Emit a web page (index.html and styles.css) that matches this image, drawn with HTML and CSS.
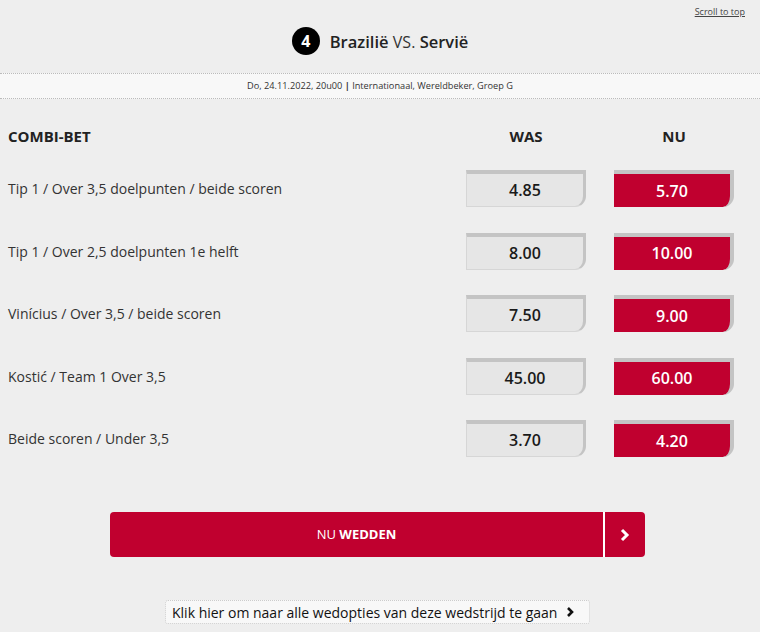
FILE: index.html
```html
<!DOCTYPE html>
<html lang="nl">
<head>
    <meta charset="UTF-8">
    <title>Brazilië vs. Servië - Combi-bet</title>
    <link rel="stylesheet" href="styles.css">
</head>
<body>
    <div class="top-bar">
        <a href="#" class="scroll-top">Scroll to top</a>
    </div>

    <h2 class="match-title">
        <span class="match-nr">4</span>
        <span><b>Brazilië</b> <span class="vs">VS.</span> <b>Servië</b></span>
    </h2>

    <div class="match-meta">
        Do, 24.11.2022, 20u00 <b>|</b> Internationaal, Wereldbeker, Groep G
    </div>

    <div class="odds-table">
        <div class="odds-row odds-head">
            <div class="label">COMBI-BET</div>
            <div class="col-title">WAS</div>
            <div class="col-title">NU</div>
        </div>

        <div class="odds-row">
            <div class="label">Tip 1 / Over 3,5 doelpunten / beide scoren</div>
            <div class="odd odd-old">4.85</div>
            <div class="odd odd-new">5.70</div>
        </div>
        <div class="odds-row">
            <div class="label">Tip 1 / Over 2,5 doelpunten 1e helft</div>
            <div class="odd odd-old">8.00</div>
            <div class="odd odd-new">10.00</div>
        </div>
        <div class="odds-row">
            <div class="label">Vinícius / Over 3,5 / beide scoren</div>
            <div class="odd odd-old">7.50</div>
            <div class="odd odd-new">9.00</div>
        </div>
        <div class="odds-row">
            <div class="label">Kostić / Team 1 Over 3,5</div>
            <div class="odd odd-old">45.00</div>
            <div class="odd odd-new">60.00</div>
        </div>
        <div class="odds-row">
            <div class="label">Beide scoren / Under 3,5</div>
            <div class="odd odd-old">3.70</div>
            <div class="odd odd-new">4.20</div>
        </div>
    </div>

    <a href="#" class="bet-btn">
        <span class="bet-text">NU <b>WEDDEN</b></span>
        <span class="bet-arrow">
            <svg width="12" height="16" viewBox="0 0 12 16"><polyline points="3,3 8,8 3,13" fill="none" stroke="#fff" stroke-width="3"/></svg>
        </span>
    </a>

    <div class="more-wrap">
        <a href="#" class="more-link">
            Klik hier om naar alle wedopties van deze wedstrijd te gaan
            <svg width="10" height="12" viewBox="0 0 10 12"><polyline points="2,2 6,6 2,10" fill="none" stroke="#111" stroke-width="2.6"/></svg>
        </a>
    </div>
</body>
</html>
```

FILE: styles.css
```css
* {
    margin: 0;
    padding: 0;
    box-sizing: border-box;
}

body {
    font-family: 'Open Sans', 'Liberation Sans', sans-serif;
    background: #eeeeee;
    color: #222;
    width: 760px;
    height: 632px;
    overflow: hidden;
}

.top-bar {
    text-align: right;
    padding: 5px 15px 0;
    height: 18px;
    font-size: 9px;
    line-height: 13px;
}

.scroll-top {
    color: #444;
}

.match-title {
    display: flex;
    justify-content: center;
    align-items: center;
    gap: 10px;
    margin-top: 9px;
    height: 28px;
    font-size: 16.5px;
    font-weight: 400;
    color: #222;
}

.match-title b {
    font-weight: 600;
}

.match-nr {
    width: 28px;
    height: 28px;
    border-radius: 50%;
    background: #000;
    color: #fff;
    font-weight: 700;
    font-size: 16px;
    display: flex;
    justify-content: center;
    align-items: center;
}

.vs {
    font-size: 16px;
    color: #333;
}

.match-meta {
    margin-top: 18px;
    height: 26px;
    line-height: 24px;
    background: #f8f8f8;
    border-top: 1px dotted #bbb;
    border-bottom: 1px dotted #bbb;
    text-align: center;
    font-size: 9.2px;
    color: #333;
}

.odds-table {
    margin-top: 22px;
    padding: 0 26px 0 8px;
    display: flex;
    flex-direction: column;
    gap: 25.5px;
}

.odds-row {
    display: grid;
    grid-template-columns: 1fr 120px 120px;
    column-gap: 28px;
    align-items: center;
    height: 37px;
}

.odds-head {
    height: 30px;
    margin-bottom: -6.5px;
}

.odds-head .label {
    font-weight: 700;
    font-size: 15px;
    color: #222;
}

.col-title {
    text-align: center;
    font-weight: 700;
    font-size: 15px;
    color: #222;
}

.label {
    font-size: 14px;
    color: #333;
}

.odd {
    height: 37px;
    display: flex;
    justify-content: center;
    align-items: center;
    font-weight: 600;
    font-size: 16px;
    border-top: 4px solid #c4c4c4;
    border-right: 3px solid #c4c4c4;
    border-bottom-right-radius: 11px;
}

.odd-old {
    background: #e6e6e6;
    color: #1a1a1a;
    border-left: 1px solid #d6d6d6;
    border-bottom: 1px solid #d6d6d6;
}

.odd-new {
    background: #c0002f;
    color: #fff;
    border-right-width: 4px;
}

.bet-btn {
    display: flex;
    width: 535px;
    height: 45px;
    margin: 55px 0 0 110px;
    border-radius: 4px;
    background: #c0002f;
    color: #fff;
    text-decoration: none;
    overflow: hidden;
}

.bet-text {
    flex: 1;
    text-align: center;
    line-height: 45px;
    font-size: 13px;
    border-right: 2px solid #fff;
}

.bet-arrow {
    width: 40px;
    display: flex;
    justify-content: center;
    align-items: center;
}

.more-wrap {
    margin-top: 43px;
    padding-left: 165px;
}

.more-link {
    display: inline-flex;
    align-items: center;
    gap: 9px;
    height: 24px;
    width: 425px;
    padding-left: 6px;
    background: #f8f8f8;
    border: 1px dotted #ccc;
    border-radius: 3px;
    font-size: 14px;
    color: #111;
    text-decoration: none;
}
```
